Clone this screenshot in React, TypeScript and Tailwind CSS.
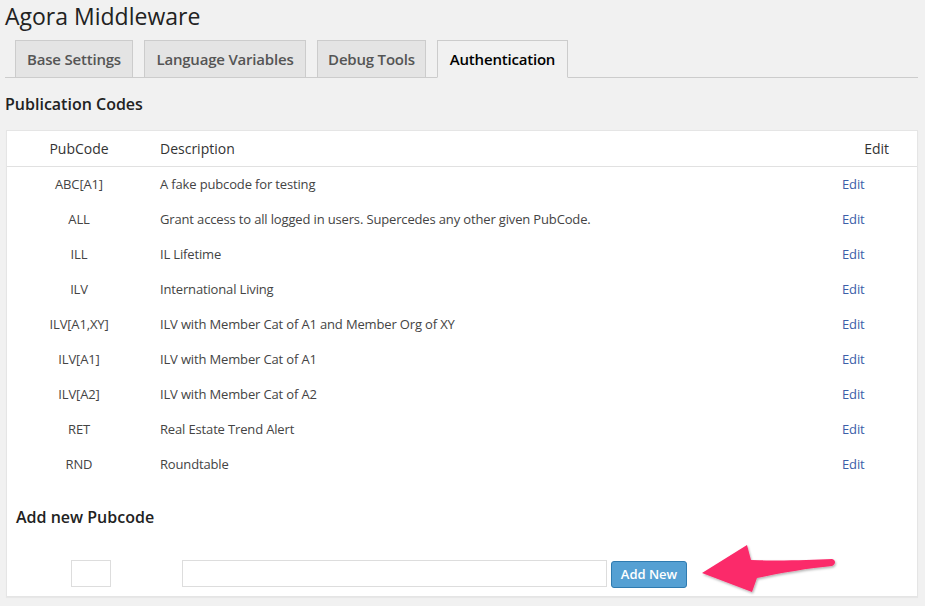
import React from 'react';

const codes = [
  { code: 'ABC[A1]', desc: 'A fake pubcode for testing' },
  { code: 'ALL', desc: 'Grant access to all logged in users. Supercedes any other given PubCode.' },
  { code: 'ILL', desc: 'IL Lifetime' },
  { code: 'ILV', desc: 'International Living' },
  { code: 'ILV[A1,XY]', desc: 'ILV with Member Cat of A1 and Member Org of XY' },
  { code: 'ILV[A1]', desc: 'ILV with Member Cat of A1' },
  { code: 'ILV[A2]', desc: 'ILV with Member Cat of A2' },
  { code: 'RET', desc: 'Real Estate Trend Alert' },
  { code: 'RND', desc: 'Roundtable' },
];

const tabs = [
  { label: 'Base Settings', w: 'w-[118px]' },
  { label: 'Language Variables', w: 'w-[162px]' },
  { label: 'Debug Tools', w: 'w-[109px]' },
  { label: 'Authentication', w: 'w-[131px]' },
];

export default function App() {
  return (
    <div
      className="relative w-[925px] h-[606px] overflow-hidden bg-[#f1f1f1] text-[#444]"
      style={{ fontFamily: '"Open Sans", "DejaVu Sans", sans-serif' }}
    >
      <h1 className="pl-[5px] pt-[1px] h-[40px] text-[23px] leading-[30px] text-[#222]">Agora Middleware</h1>

      {/* tabs */}
      <div className="ml-[5px] mr-[7px] h-[38px] flex items-end gap-[11px] pl-[10px] border-b border-[#ccc]">
        {tabs.map((t) => {
          const active = t.label === 'Authentication';
          return (
            <div
              key={t.label}
              className={
                active
                  ? `${t.w} h-[38px] -mb-px flex items-center justify-center border border-[#ccc] border-b-[#f1f1f1] bg-[#f1f1f1] text-[15px] font-semibold text-black tracking-[-0.2px]`
                  : `${t.w} h-[37px] flex items-center justify-center border border-[#ccc] border-b-0 bg-[#e4e4e4] text-[15px] font-semibold text-[#555] tracking-[-0.2px]`
              }
            >
              {t.label}
            </div>
          );
        })}
      </div>

      <h2 className="pl-[5px] pt-[15px] h-[52px] text-[16px] leading-[22px] font-semibold text-[#222]">Publication Codes</h2>

      {/* table card */}
      <div className="ml-[6px] w-[912px] h-[467px] bg-white border border-[#e5e5e5] shadow-[0_1px_1px_rgba(0,0,0,0.04)]">
        <div className="grid grid-cols-[144px_1fr_84px] h-[36px] items-center border-b border-[#e1e1e1] text-[14px] text-[#333]">
          <div className="text-center">PubCode</div>
          <div className="pl-[9px]">Description</div>
          <div className="text-right pr-[28px]">Edit</div>
        </div>
        {codes.map((c) => (
          <div key={c.code} className="grid grid-cols-[144px_1fr_84px] h-[35px] items-center text-[13px] text-[#444] tracking-[-0.15px]">
            <div className="text-center">{c.code}</div>
            <div className="pl-[9px]">{c.desc}</div>
            <div className="pl-[9px] text-[#3b5ea8]">Edit</div>
          </div>
        ))}

        <h3 className="pl-[9px] pt-[24px] h-[77px] text-[16px] leading-[22px] font-semibold text-[#222]">Add new Pubcode</h3>

        <div className="flex items-center h-[28px]">
          <input className="ml-[64px] w-[40px] h-[27px] border border-[#ddd] bg-white" />
          <input className="ml-[71px] w-[425px] h-[27px] border border-[#ddd] bg-white" />
          <button className="ml-[4px] mt-[2px] w-[76px] h-[27px] pt-[2px] rounded-[3px] border border-[#2f7bb0] bg-[#55a0d3] text-white text-[13px] font-semibold">
            Add New
          </button>
        </div>
      </div>

      {/* annotation arrow */}
      <svg className="absolute left-0 top-0 pointer-events-none" width="925" height="606">
        <defs>
          <filter id="sh" x="-10%" y="-30%" width="130%" height="160%">
            <feDropShadow dx="1" dy="1.5" stdDeviation="1.2" floodColor="#000" floodOpacity="0.3" />
          </filter>
        </defs>
        <path
          d="M702 573 L747 545 L751 560 C780 561 810 560 832 559 C836 560 836 564 832 566 C810 568 780 573 757 578 L752 592 Z"
          fill="#fb2a6a"
          filter="url(#sh)"
        />
      </svg>
    </div>
  );
}
